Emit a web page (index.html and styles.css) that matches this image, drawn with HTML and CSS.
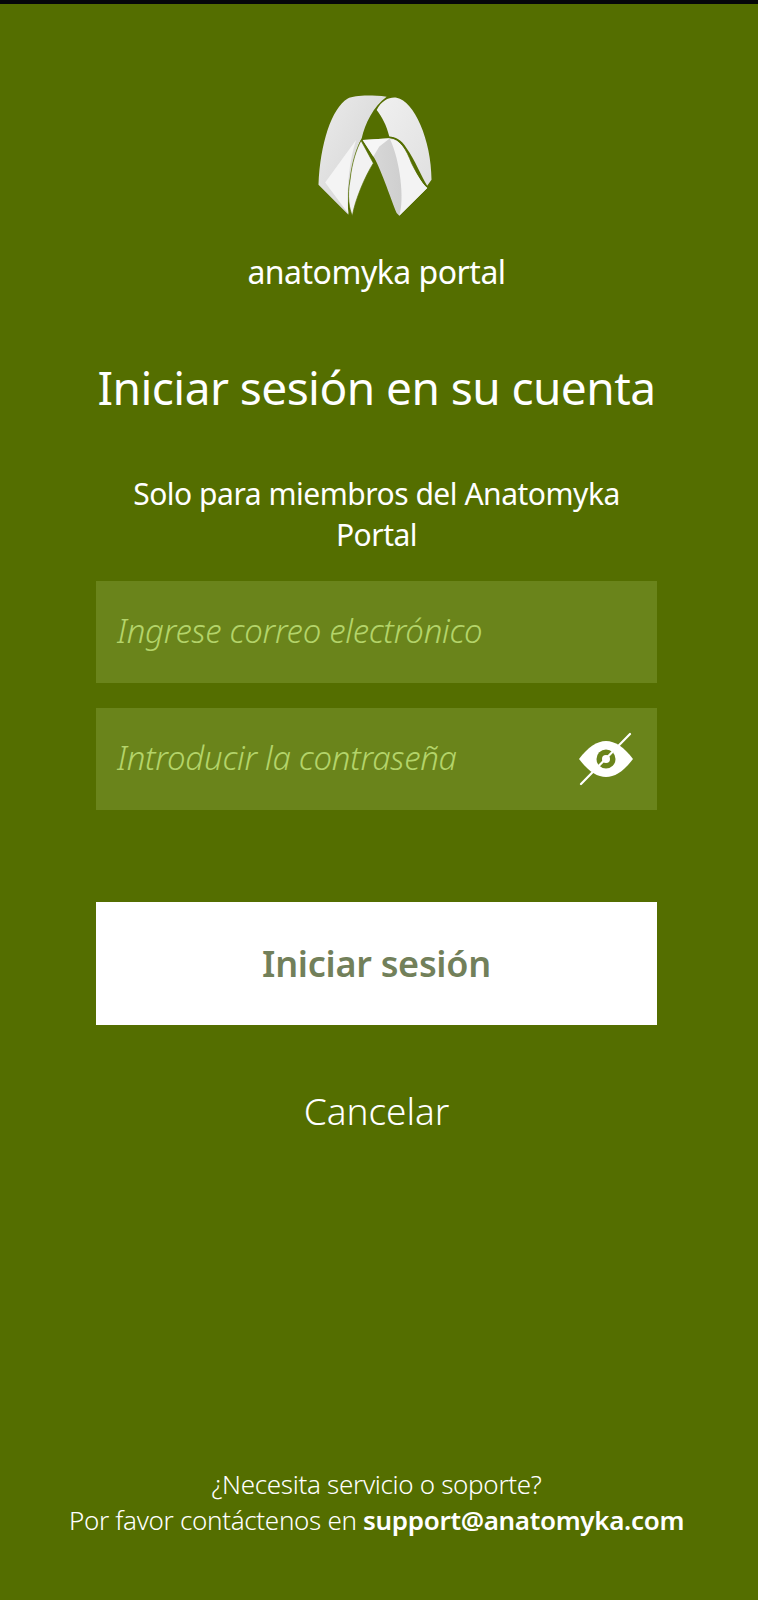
FILE: index.html
```html
<!DOCTYPE html>
<html lang="es">
<head>
<meta charset="utf-8">
<title>Anatomyka Portal</title>
<link rel="stylesheet" href="styles.css">
</head>
<body>
<main class="screen">
  <div class="top">
    <svg class="logo" viewBox="84.5 285 350 370" aria-label="Anatomyka">
      <defs>
        <linearGradient id="gL" x1="0" y1="0" x2="1" y2="1">
          <stop offset="0" stop-color="#ebebeb"/><stop offset=".55" stop-color="#dcdcdc"/><stop offset="1" stop-color="#c4c4c4"/>
        </linearGradient>
        <linearGradient id="gR" x1="0" y1="0" x2="1" y2="1">
          <stop offset="0" stop-color="#f0f0f0"/><stop offset="1" stop-color="#e0e0e0"/>
        </linearGradient>
        <linearGradient id="gC" x1="0" y1="0" x2="1" y2="0">
          <stop offset="0" stop-color="#dadada"/><stop offset=".6" stop-color="#cfcfcf"/><stop offset="1" stop-color="#eeeeee"/>
        </linearGradient>
      </defs>
      <path fill="url(#gL)" d="M290 290C240 285 195 285 172 296C125 325 90 430 85 555L175 645C170 570 185 470 215 415C225 370 250 320 290 290Z"/>
      <path fill="#f4f4f4" d="M198 420L105 548L175 642C168 570 178 480 198 420Z"/>
      <path fill="url(#gR)" d="M260 330C275 300 300 290 320 293C372 302 425 420 425 540L412 558C395 530 375 480 350 445C335 420 315 410 298 410C290 375 275 350 260 330Z"/>
      <path fill="#f2f2f2" stroke="#546e00" stroke-width="2" d="M213 422L250 490C225 530 195 600 187 648C178 630 170 590 180 540C185 490 200 445 213 422Z"/>
      <path fill="url(#gC)" d="M218 420L300 415C330 417 350 450 365 490C380 520 395 550 412 565L328 648L320 640C300 590 270 500 250 470Z"/>
      <path fill="#f6f6f6" d="M218 420L300 415L268 440L250 470Z"/>
      <path fill="#f3f3f3" d="M300 417C330 417 350 450 365 490C380 520 395 550 412 565L328 648C345 600 330 480 300 417Z"/>
      <path fill="none" stroke="#546e00" stroke-width="2.5" d="M298 412C330 414 350 450 365 490C380 520 395 545 412 562"/>
    </svg>
    <p class="brand">anatomyka portal</p>
  </div>
  <h1 class="title">Iniciar sesión en su cuenta</h1>
  <p class="intro">Solo para miembros del Anatomyka Portal</p>
  <form class="form">
    <div class="field"><span class="hint">Ingrese correo electrónico</span></div>
    <div class="field"><span class="hint">Introducir la contraseña</span>
      <svg class="eye" viewBox="0 0 60 60" aria-hidden="true">
        <path fill="#fff" d="M3 30C12 18 21 12 30 12C39 12 48 18 57 30C48 42 39 48 30 48C21 48 12 42 3 30Z"/>
        <circle cx="30" cy="30" r="9.5" fill="#6a841b"/>
        <circle cx="30" cy="30" r="4" fill="#fff"/>
        <path stroke="#fff" stroke-width="2.2" stroke-linecap="round" d="M5 55L54 5"/>
      </svg>
    </div>
    <button class="submit" type="button">Iniciar sesión</button>
  </form>
  <p class="cancel">Cancelar</p>
  <footer class="foot">
    <p>¿Necesita servicio o soporte?</p>
    <p>Por favor contáctenos en <strong>support@anatomyka.com</strong></p>
  </footer>
</main>
</body>
</html>
```
FILE: styles.css
```css
* { box-sizing: border-box; }
html, body { margin: 0; padding: 0; }
body { background: #546e00; }
p, h1 { margin: 0; }
.screen {
  width: 758px;
  height: 1600px;
  padding-right: 5px;
  background: #546e00;
  border-top: 4px solid #05070a;
  color: #fff;
  font-family: "Noto Sans", sans-serif;
  display: flex;
  flex-direction: column;
  align-items: center;
  text-align: center;
}
.top { display: flex; flex-direction: column; align-items: center; padding-top: 91px; }
.logo { width: 117px; height: 123px; display: block; }
.brand { margin-top: 31px; font-size: 32px; line-height: 46px; font-weight: 400; letter-spacing: -.5px; }
.title { margin-top: 62px; font-size: 46px; line-height: 60px; font-weight: 400; letter-spacing: -.55px; }
.intro { margin-top: 56px; width: 540px; font-size: 30px; line-height: 41px; letter-spacing: -.48px; }
.form { width: 561px; margin-top: 26px; display: flex; flex-direction: column; gap: 25px; }
.field {
  height: 102px;
  background: #6a841b;
  display: flex;
  align-items: center;
  justify-content: space-between;
  padding: 0 21px;
}
.hint { font-size: 33px; line-height: 44px; margin-bottom: 2px; font-style: italic; font-weight: 300; color: #b4d46a; letter-spacing: -.3px; }
.eye { width: 60px; height: 60px; flex: none; }
.submit {
  margin-top: 67px;
  height: 123px;
  padding-bottom: 2px;
  border: 0;
  background: #fff;
  color: #72805a;
  font: 600 36px "Noto Sans", sans-serif;
  letter-spacing: -.28px;
}
.cancel { margin-top: 61px; font-size: 37px; line-height: 50px; font-weight: 300; letter-spacing: -.05px; }
.foot { margin-top: auto; margin-bottom: 62px; font-size: 26px; line-height: 36px; font-weight: 300; letter-spacing: -.32px; }
.foot strong { font-weight: 600; }
```
